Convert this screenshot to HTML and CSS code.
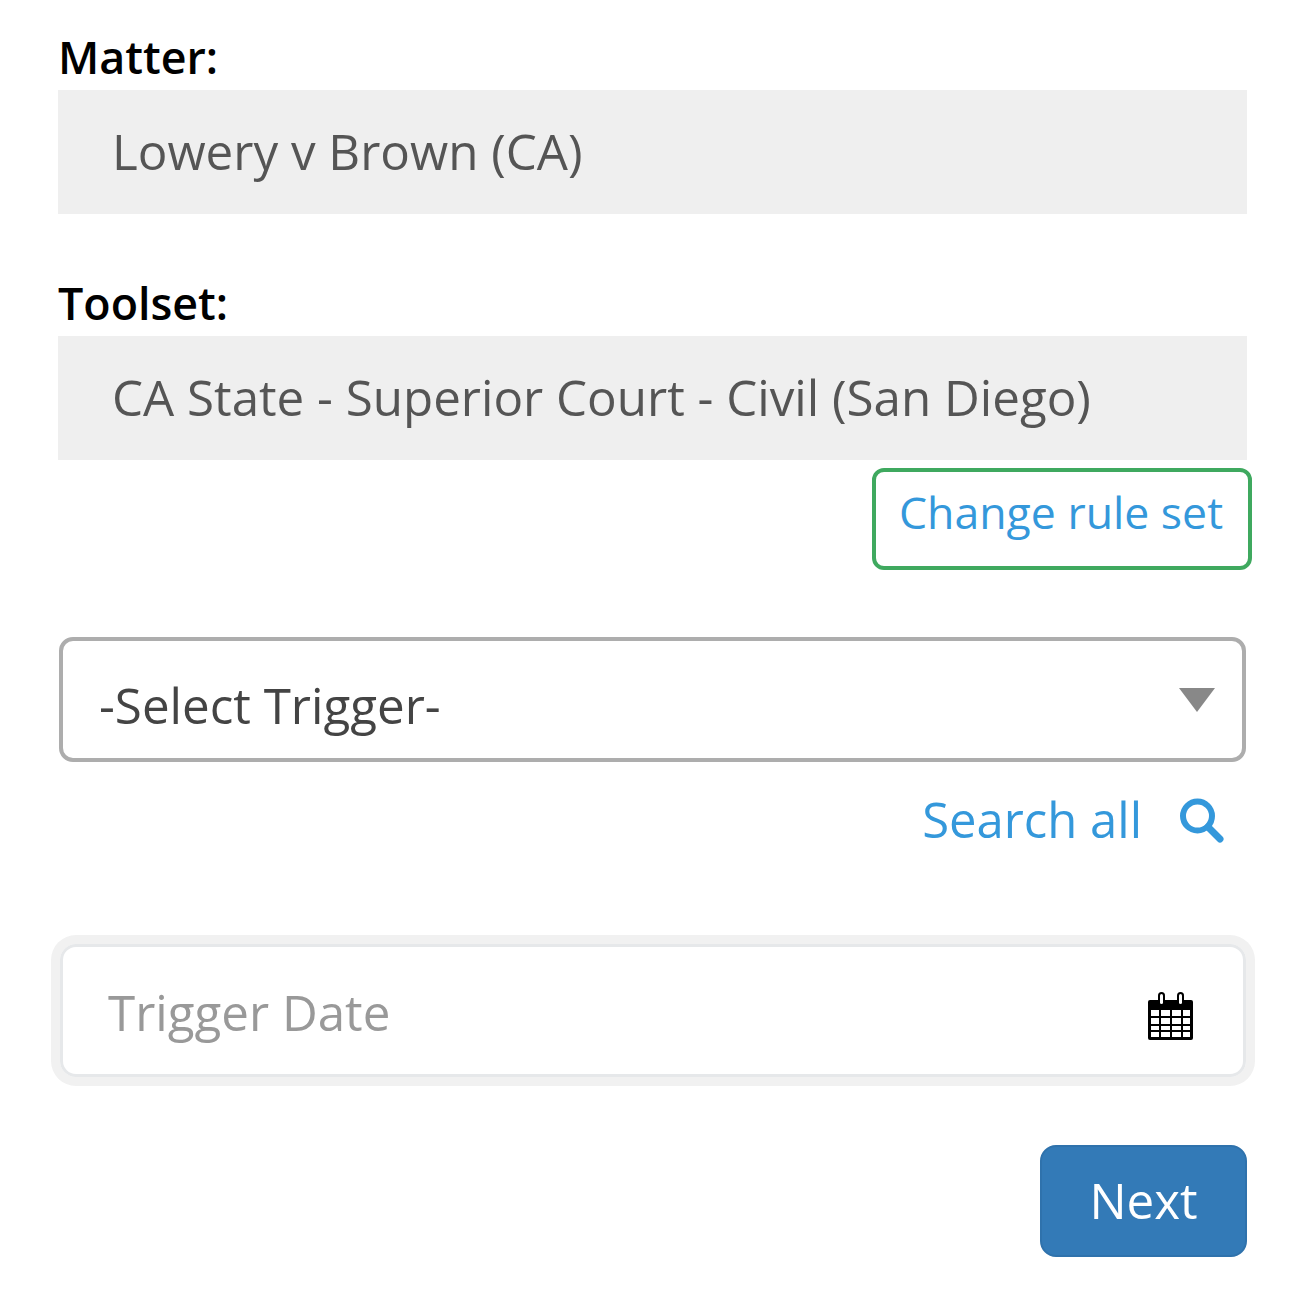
FILE: index.html
```html
<!DOCTYPE html>
<html lang="en">
<head>
    <meta charset="UTF-8">
    <title>Add Trigger</title>
    <link rel="stylesheet" href="styles.css">
</head>
<body>
<div class="form">
    <label class="field-label first">Matter:</label>
    <div class="readonly">Lowery v Brown (CA)</div>
    <label class="field-label second">Toolset:</label>
    <div class="readonly">CA State - Superior Court - Civil (San Diego)</div>
    <div class="link-row">
        <a class="change-link">Change rule set</a>
    </div>
    <div class="select-box">
        <span>-Select Trigger-</span>
        <span class="caret"></span>
    </div>
    <div class="search-row">
        <a class="search-link">Search all</a>
        <svg class="search-icon" viewBox="0 0 46 46" width="46" height="46">
            <circle cx="19.5" cy="19" r="14.5" fill="none" stroke="#3498db" stroke-width="6"/>
            <path d="M30 30 L42 42" fill="none" stroke="#3498db" stroke-width="7" stroke-linecap="round"/>
        </svg>
    </div>
    <div class="date-box">
        <span class="placeholder">Trigger Date</span>
        <svg class="cal-icon" viewBox="0 0 47 50" width="47" height="50">
            <path d="M3 9 H44 Q46 9 46 11 V47 Q46 49 44 49 H3 Q1 49 1 47 V11 Q1 9 3 9 Z" fill="#000"/>
            <rect x="11" y="1" width="7" height="14" rx="3.5" fill="#000"/>
            <rect x="30" y="1" width="7" height="14" rx="3.5" fill="#000"/>
            <rect x="13" y="3" width="3" height="10" rx="1.5" fill="#fff"/>
            <rect x="32" y="3" width="3" height="10" rx="1.5" fill="#fff"/>
            <g fill="#fff">
                <rect x="4" y="19" width="8" height="6"/><rect x="14" y="19" width="9" height="6"/><rect x="25" y="19" width="9" height="6"/><rect x="36" y="19" width="7" height="6"/>
                <rect x="4" y="27" width="8" height="6"/><rect x="14" y="27" width="9" height="6"/><rect x="25" y="27" width="9" height="6"/><rect x="36" y="27" width="7" height="6"/>
                <rect x="4" y="35" width="8" height="4"/><rect x="14" y="35" width="9" height="4"/><rect x="25" y="35" width="9" height="4"/><rect x="36" y="35" width="7" height="4"/>
                <rect x="4" y="41" width="8" height="5"/><rect x="14" y="41" width="9" height="5"/><rect x="25" y="41" width="9" height="5"/><rect x="36" y="41" width="7" height="5"/>
            </g>
        </svg>
    </div>
    <div class="btn-row">
        <button class="next-btn">Next</button>
    </div>
</div>
</body>
</html>
```

FILE: styles.css
```css
* {
    margin: 0;
    padding: 0;
    box-sizing: border-box;
}
body {
    background: #fff;
    font-family: "Open Sans", "DejaVu Sans", sans-serif;
    color: #555;
}
.form {
    width: 1189px;
    margin-left: 58px;
    padding-top: 30px;
    padding-bottom: 43px;
}
.field-label {
    display: block;
    height: 60px;
    line-height: 54px;
    font-size: 44.8px;
    font-weight: 600;
    color: #000;
}
.field-label.second {
    margin-top: 62px;
    height: 60px;
}
.readonly {
    height: 124px;
    line-height: 122px;
    padding-left: 54px;
    background: #efefef;
    font-size: 49.3px;
    color: #555;
}
.link-row {
    display: flex;
    justify-content: flex-end;
    margin-top: 8px;
    margin-right: -5px;
}
.change-link {
    display: block;
    width: 380px;
    height: 102px;
    line-height: 80px;
    padding-left: 23px;
    border: 4px solid #3fa95f;
    border-radius: 12px;
    font-size: 44.6px;
    color: #3498db;
}
.select-box {
    display: flex;
    align-items: center;
    justify-content: space-between;
    height: 125px;
    margin-top: 67px;
    margin-left: 1px;
    margin-right: 1px;
    padding: 10px 27px 0 36px;
    border: 4px solid #adadad;
    border-radius: 14px;
    font-size: 49.3px;
    color: #444;
}
.caret {
    width: 0;
    height: 0;
    margin-top: -10px;
    border-left: 18px solid transparent;
    border-right: 18px solid transparent;
    border-top: 24px solid #888;
}
.search-row {
    display: flex;
    justify-content: flex-end;
    align-items: center;
    gap: 36px;
    height: 60px;
    margin-top: 27px;
    padding-right: 23px;
}
.search-link {
    font-size: 49px;
    color: #3498db;
}
.search-icon {
    margin-top: 2px;
}
.date-box {
    display: flex;
    align-items: center;
    justify-content: space-between;
    height: 133px;
    margin-top: 95px;
    margin-left: 2px;
    margin-right: 1px;
    padding: 1px 49px 0 45px;
    border: 3px solid #e6e8ea;
    border-radius: 16px;
    box-shadow: 0 0 0 9px #f1f1f1;
    font-size: 49.3px;
}
.placeholder {
    color: #999;
}
.cal-icon {
    margin-top: 10px;
}
.btn-row {
    display: flex;
    justify-content: flex-end;
    margin-top: 68px;
}
.next-btn {
    width: 207px;
    height: 112px;
    padding-bottom: 3px;
    border: 2px solid #2f72ac;
    border-radius: 16px;
    background: #337ab7;
    color: #fff;
    font-family: inherit;
    font-size: 49.3px;
}
```
